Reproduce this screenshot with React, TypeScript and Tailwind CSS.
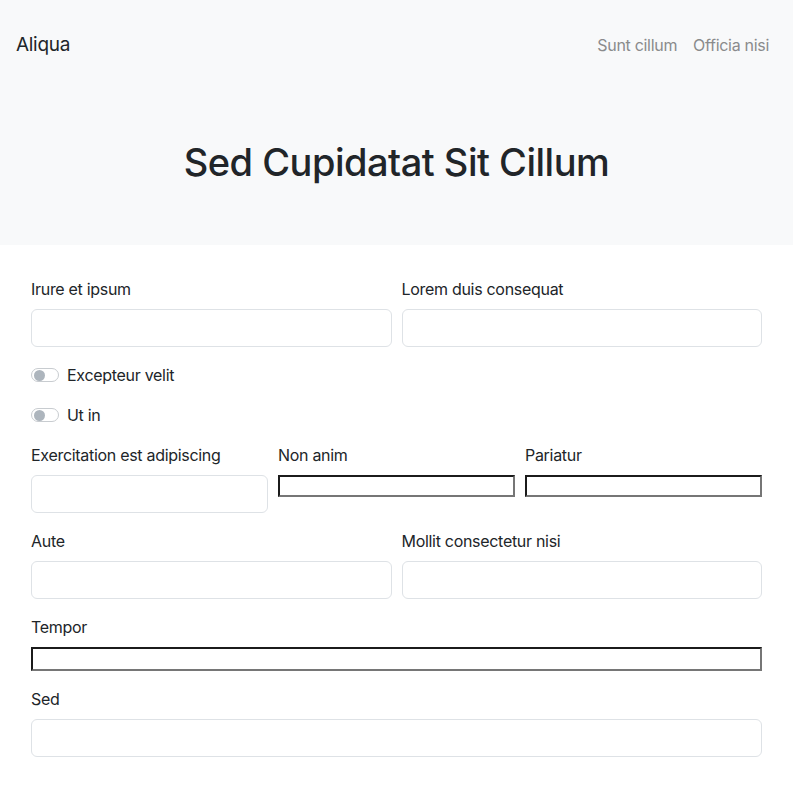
const fieldInput =
  "block h-[38px] w-full rounded-[6px] border border-[#dee2e6] bg-white px-3 text-base";
const plainInput =
  "block w-full border-2 border-t-[#1b1b1b] border-l-[#1b1b1b] border-r-[#767676] border-b-[#767676] bg-white px-0.5 text-[13px]";

function Field({ label, plain }: { label: string; plain?: boolean }) {
  return (
    <div>
      <label className="mb-2 block text-base leading-6">{label}</label>
      <input
        className={plain ? `mt-[3px] h-[22px] ${plainInput}` : fieldInput}
        type="text"
      />
    </div>
  );
}

function Toggle({ label }: { label: string }) {
  return (
    <label className="flex h-6 items-center gap-2">
      <span className="flex h-[14px] w-[28px] items-center rounded-full border border-[#c8ccd0] bg-white px-[1.5px]">
        <span className="h-[11px] w-[11px] rounded-full bg-[#adb5bd]" />
      </span>
      <span className="text-base leading-6">{label}</span>
    </label>
  );
}

export default function App() {
  return (
    <div className="min-h-[791px] bg-white font-['Inter',sans-serif] tracking-[-0.3px] text-[#212529]">
      <header className="h-[245px] bg-[#f8f9fa]">
        <nav className="flex items-center justify-between px-4 pt-[30px]">
          <a className="text-[19px] leading-[30px]">Aliqua</a>
          <div className="flex">
            <a className="px-2 leading-[30px] text-[#8a8b8c]">Sunt cillum</a>
            <a className="px-2 leading-[30px] text-[#8a8b8c]">Officia nisi</a>
          </div>
        </nav>
        <h1 className="mt-[78px] text-center text-[38px] leading-[48px] font-medium tracking-[-0.5px]">
          Sed Cupidatat Sit Cillum
        </h1>
      </header>

      <form className="flex flex-col gap-4 px-[31px] pt-8 pb-8">
        <div className="grid grid-cols-2 gap-x-[10px]">
          <Field label="Irure et ipsum" />
          <Field label="Lorem duis consequat" />
        </div>
        <Toggle label="Excepteur velit" />
        <Toggle label="Ut in" />
        <div className="grid grid-cols-3 items-start gap-x-[10px]">
          <Field label="Exercitation est adipiscing" />
          <Field label="Non anim" plain />
          <Field label="Pariatur" plain />
        </div>
        <div className="grid grid-cols-2 gap-x-[10px]">
          <Field label="Aute" />
          <Field label="Mollit consectetur nisi" />
        </div>
        <div>
          <label className="mb-2 block text-base leading-6">Tempor</label>
          <input className={`mt-[1px] h-[24px] ${plainInput}`} type="text" />
        </div>
        <Field label="Sed" />
      </form>
    </div>
  );
}
